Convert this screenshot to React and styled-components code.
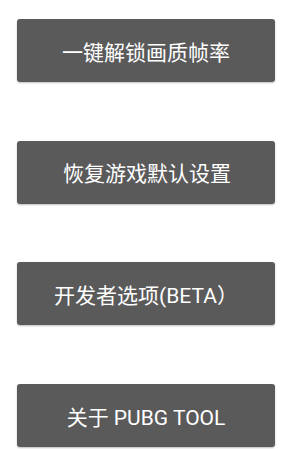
import React from 'react';
import styled, { createGlobalStyle } from 'styled-components';

const GlobalStyle = createGlobalStyle`
    html, body {
        margin: 0;
        padding: 0;
        background: #ffffff;
    }
`;

const Screen = styled.div`
    display: flex;
    flex-direction: column;
    align-items: stretch;
    gap: 58.7px;
    padding: 19px 19px 0 17px;
    width: 294px;
    height: 449px;
    box-sizing: border-box;
    font-family: Roboto, "Noto Sans CJK SC", sans-serif;
`;

const MenuButton = styled.button`
    display: flex;
    align-items: center;
    justify-content: center;
    height: 63px;
    padding: 0 0 0 ${(props) => props.shift || 0}px;
    border: none;
    border-radius: 3px;
    background: #5a5a5b;
    box-shadow: 0 1px 2px rgba(0, 0, 0, 0.25);
    color: #ffffff;
    font-family: inherit;
    font-size: 21px;
    cursor: pointer;
`;

const items = [
    { label: '一键解锁画质帧率' },
    { label: '恢复游戏默认设置', shift: 2 },
    { label: '开发者选项(BETA）' },
    { label: '关于 PUBG TOOL' }
];

export default function App() {
    return (
        <>
            <GlobalStyle />
            <Screen>
                {items.map((item) => (
                    <MenuButton key={item.label} shift={item.shift}>
                        {item.label}
                    </MenuButton>
                ))}
            </Screen>
        </>
    );
}
